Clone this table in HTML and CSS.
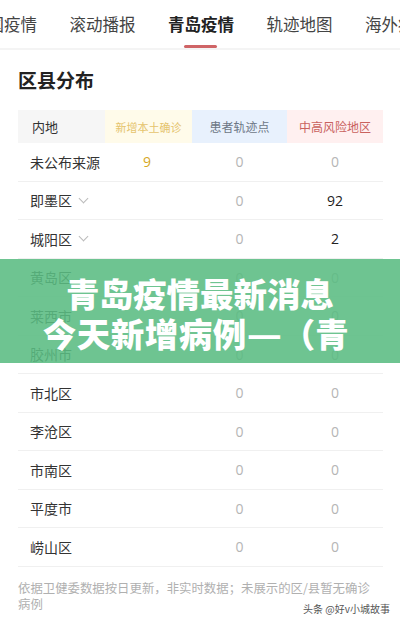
FILE: index.html
```html
<!DOCTYPE html>
<html>
<head>
  <meta charset="utf-8">
  <link rel="stylesheet" href="styles.css">
</head>
<body>
  <div class="tabs">
    <span class="tab first">国疫情</span>
    <span class="tab">滚动播报</span>
    <span class="tab active">青岛疫情</span>
    <span class="tab">轨迹地图</span>
    <span class="tab">海外疫</span>
  </div>
  <div class="content">
    <h2 class="title">区县分布</h2>
    <div class="table">
      <div class="row head">
        <div class="cell name">内地</div>
        <div class="cell yellow">新增本土确诊</div>
        <div class="cell blue">患者轨迹点</div>
        <div class="cell pink">中高风险地区</div>
      </div>
      <div class="row"><div class="cell name">未公布来源</div><div class="cell num gold">9</div><div class="cell num">0</div><div class="cell num">0</div></div>
      <div class="row"><div class="cell name">即墨区 <span class="chev"></span></div><div class="cell num"></div><div class="cell num">0</div><div class="cell num dark">92</div></div>
      <div class="row"><div class="cell name">城阳区 <span class="chev"></span></div><div class="cell num"></div><div class="cell num">0</div><div class="cell num dark">2</div></div>
      <div class="row"><div class="cell name">黄岛区</div><div class="cell num"></div><div class="cell num">0</div><div class="cell num">0</div></div>
      <div class="row"><div class="cell name">莱西市</div><div class="cell num"></div><div class="cell num">0</div><div class="cell num">0</div></div>
      <div class="row"><div class="cell name">胶州市</div><div class="cell num"></div><div class="cell num">0</div><div class="cell num">0</div></div>
      <div class="row"><div class="cell name">市北区</div><div class="cell num"></div><div class="cell num">0</div><div class="cell num">0</div></div>
      <div class="row"><div class="cell name">李沧区</div><div class="cell num"></div><div class="cell num">0</div><div class="cell num">0</div></div>
      <div class="row"><div class="cell name">市南区</div><div class="cell num"></div><div class="cell num">0</div><div class="cell num">0</div></div>
      <div class="row"><div class="cell name">平度市</div><div class="cell num"></div><div class="cell num">0</div><div class="cell num">0</div></div>
      <div class="row"><div class="cell name">崂山区</div><div class="cell num"></div><div class="cell num">0</div><div class="cell num">0</div></div>
    </div>
    <p class="note">依据卫健委数据按日更新，非实时数据；未展示的区/县暂无确诊<br>病例</p>
  </div>
  <div class="mark">头条 @好v小城故事</div>
  <div class="banner">
    <div class="banner-line">青岛疫情最新消息</div>
    <div class="banner-line second">今天新增病例<span class="dash">—</span><span class="paren">（</span>青</div>
  </div>
</body>
</html>
```

FILE: styles.css
```css
body {
  margin: 0;
  background: #fff;
  font-family: "Noto Sans CJK SC", "Noto Sans", sans-serif;
  color: #333;
  overflow: hidden;
  width: 400px;
  height: 623px;
  position: relative;
}

.tabs {
  height: 48px;
  display: flex;
  white-space: nowrap;
  overflow: hidden;
  border-bottom: 2px solid #f4f4f4;
  font-size: 16.5px;
  color: #444;
}

.tab {
  display: block;
  line-height: 48px;
  margin-left: 32.5px;
  position: relative;
  flex-shrink: 0;
}

.tab.first {
  margin-left: -12.5px;
}

.tab.active {
  font-weight: bold;
  color: #222;
}

.tab.active::after {
  content: "";
  position: absolute;
  left: 16px;
  width: 33px;
  height: 3px;
  bottom: 0;
  background: #cf6466;
  border-radius: 2px;
}

.content {
  padding: 0 17px 0 18px;
}

.title {
  margin: 15px 0 0;
  font-size: 19px;
  line-height: 30px;
  font-weight: bold;
  color: #222;
}

.table {
  margin-top: 15px;
}

.row {
  display: flex;
  height: 38.5px;
  box-sizing: border-box;
  border-bottom: 1px solid #f0f0f0;
  align-items: center;
}

.row.head {
  height: 33px;
  border-bottom: none;
  align-items: stretch;
}

.cell {
  display: flex;
  align-items: center;
  justify-content: center;
  font-size: 12px;
}

.cell:nth-child(1) { width: 87px; }
.cell:nth-child(2) { width: 87px; }
.cell:nth-child(3) { width: 95px; }
.cell:nth-child(4) { width: 96px; }

.cell.name {
  justify-content: flex-start;
  padding-left: 12px;
  box-sizing: border-box;
  font-size: 14px;
  color: #333;
}

.head .name {
  background: #f6f6f6;
  font-size: 13px;
  padding-left: 14px;
}

.yellow { background: #fffbea; color: #e5c46e; font-size: 11px; }
.blue { background: #e8f1fd; color: #6d7785; }
.pink { background: #fff0f0; color: #c9625e; }

.num {
  font-size: 14px;
  color: #b5b5b5;
  font-family: "Open Sans", sans-serif;
}

.num.gold { color: #d6a825; justify-content: flex-start; padding-left: 38px; box-sizing: border-box; }
.num.dark { color: #222; }

.chev {
  display: inline-block;
  width: 6px;
  height: 6px;
  border-right: 1px solid #bbb;
  border-bottom: 1px solid #bbb;
  transform: rotate(45deg);
  margin: -4px 0 0 8px;
}

.note {
  margin: 13px 0 0;
  font-size: 12.4px;
  line-height: 16px;
  color: #b0b0b0;
}

.mark {
  position: absolute;
  right: 10px;
  bottom: 8px;
  font-size: 10px;
  line-height: 13px;
  color: #555;
}

.banner {
  position: absolute;
  top: 259px;
  left: 0;
  width: 400px;
  height: 104px;
  padding-top: 14px;
  box-sizing: border-box;
  background: rgba(90, 188, 130, 0.88);
  overflow: hidden;
}

.banner-line {
  text-align: center;
  color: #fff;
  font-weight: 900;
  font-size: 33.5px;
  line-height: 40px;
  white-space: nowrap;
}

.banner-line.second {
  letter-spacing: 0.5px;
  padding-right: 8px;
}

.dash {
  display: inline-block;
  width: 1.05em;
  text-align: center;
  transform: scaleX(1.15);
}

.paren {
  display: inline-block;
  width: 1em;
  text-align: right;
}
```
